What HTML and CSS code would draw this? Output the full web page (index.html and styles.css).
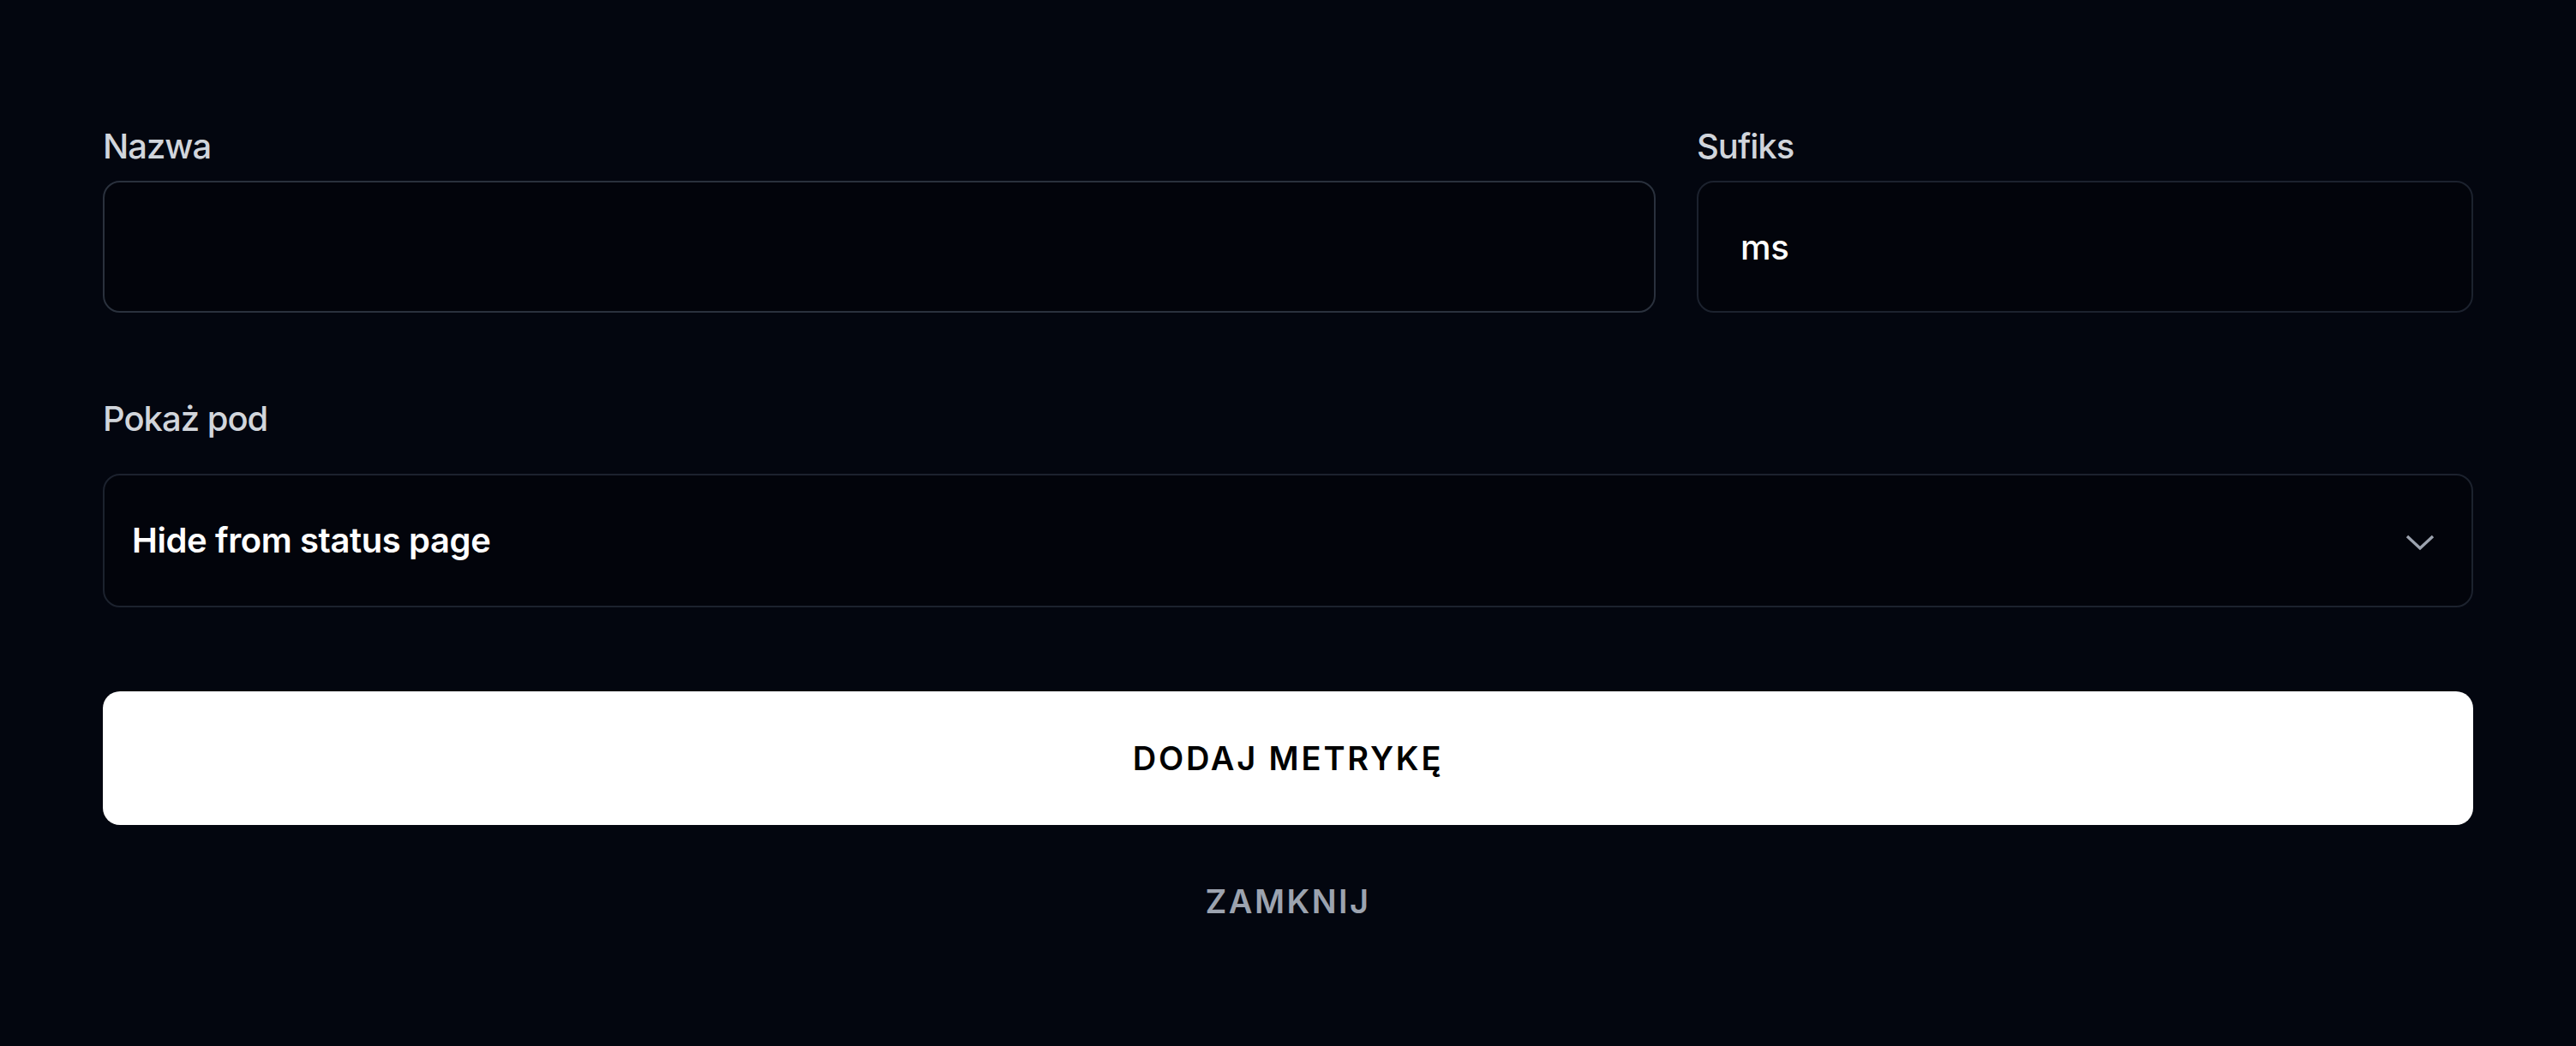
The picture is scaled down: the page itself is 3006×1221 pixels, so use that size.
FILE: index.html
```html
<!DOCTYPE html>
<html lang="pl">
<head>
<meta charset="utf-8">
<title>Dodaj metrykę</title>
<link rel="stylesheet" href="styles.css">
</head>
<body>
<form class="metric-form">
  <div class="row-top">
    <div class="field">
      <label class="field-label" for="name">Nazwa</label>
      <input class="text-input text-input--focus" id="name" type="text" value="">
    </div>
    <div class="field">
      <label class="field-label" for="suffix">Sufiks</label>
      <input class="text-input" id="suffix" type="text" value="ms">
    </div>
  </div>
  <div class="field field--select">
    <label class="field-label field-label--wide">Pokaż pod</label>
    <div class="select-box">
      <span class="select-value">Hide from status page</span>
      <svg class="chevron" width="34" height="20" viewBox="0 0 34 20" aria-hidden="true">
        <path d="M2 3 L17 17 L32 3" fill="none" stroke="#9ca3af" stroke-width="3.4"/>
      </svg>
    </div>
  </div>
  <button class="btn-primary" type="button">DODAJ METRYKĘ</button>
  <button class="btn-link" type="button">ZAMKNIJ</button>
</form>
</body>
</html>
```

FILE: styles.css
```css
html, body {
  margin: 0;
  padding: 0;
  background: #03060f;
}

body {
  font-family: Inter, "Noto Sans", "Liberation Sans", sans-serif;
  color: #ffffff;
  -webkit-font-smoothing: antialiased;
}

.metric-form {
  display: flex;
  flex-direction: column;
  padding: 147px 120px 0 120px;
}

.row-top {
  display: grid;
  grid-template-columns: 2fr 1fr;
  column-gap: 48px;
}

.field {
  display: flex;
  flex-direction: column;
}

.field-label {
  font-size: 40px;
  line-height: 48px;
  font-weight: 500;
  letter-spacing: -0.025em;
  color: #d1d5db;
  margin-bottom: 16px;
}

.field-label--wide {
  margin-bottom: 40px;
}

.text-input {
  box-sizing: border-box;
  height: 154px;
  width: 100%;
  margin: 0;
  padding: 0 49px;
  border: 2px solid #1c222e;
  border-radius: 20px;
  background: #02040b;
  color: #ffffff;
  font-family: inherit;
  font-size: 40px;
  font-weight: 500;
  letter-spacing: -0.01em;
  outline: none;
}

.text-input--focus {
  border-color: #2a313d;
}

.field--select {
  margin-top: 100px;
}

.select-box {
  box-sizing: border-box;
  height: 156px;
  display: flex;
  align-items: center;
  justify-content: space-between;
  padding: 0 43px 0 32px;
  border: 2px solid #1c222e;
  border-radius: 20px;
  background: #02040b;
}

.select-value {
  font-size: 40px;
  line-height: 48px;
  font-weight: 600;
  letter-spacing: -0.01em;
  color: #ffffff;
}

.chevron {
  display: block;
  margin-top: 4px;
}

.btn-primary {
  margin: 98px 0 0 0;
  height: 156px;
  border: none;
  border-radius: 20px;
  background: #ffffff;
  color: #000000;
  font-family: inherit;
  font-size: 38px;
  font-weight: 600;
  letter-spacing: 0.075em;
  padding: 0;
  cursor: pointer;
}

.btn-link {
  align-self: center;
  margin: 66px 0 0 0;
  padding: 0;
  border: none;
  background: transparent;
  color: #9ca3af;
  font-family: inherit;
  font-size: 38px;
  line-height: 46px;
  font-weight: 600;
  letter-spacing: 0.065em;
  cursor: pointer;
}
```
